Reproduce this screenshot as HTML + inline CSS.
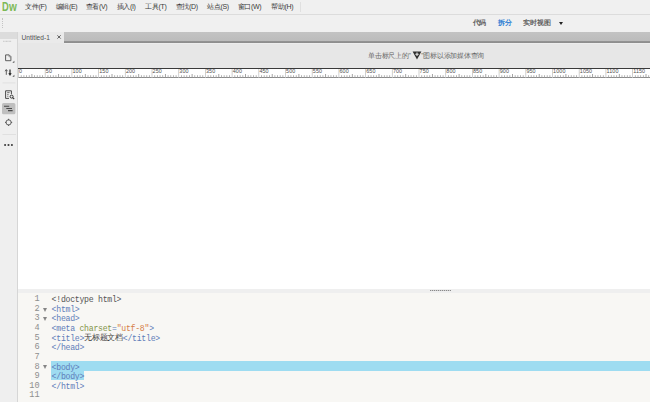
<!DOCTYPE html>
<html><head><meta charset="utf-8">
<style>
*{margin:0;padding:0;box-sizing:border-box}
html,body{width:650px;height:402px;overflow:hidden;background:#fff;font-family:"Liberation Sans",sans-serif}
.a{position:absolute}
#menubar{left:0;top:0;width:650px;height:15px;background:#f0f0f0;border-bottom:1px solid #dcdcdc}
.mi{position:absolute;top:1.6px;font-size:7px;line-height:10px;color:#3a3a3a;white-space:nowrap;letter-spacing:-0.3px}
.logo{position:absolute;top:-1px;font-size:12px;line-height:14px;font-weight:bold;color:#7db956;transform-origin:0 0;transform:scaleX(0.78)}
#toolbar{left:0;top:15px;width:650px;height:17px;background:#f0f0f0}
.vb{position:absolute;top:18.2px;font-size:6.6px;line-height:10px;color:#606060;font-weight:bold;white-space:nowrap;letter-spacing:-0.5px}
#tabbar{left:18px;top:32px;width:632px;height:11px;background:linear-gradient(#c3c3c3,#bcbcbc 78%,#939393 86%,#8c8c8c)}
#tab{left:18px;top:32px;width:46px;height:12px;background:#eaeaea}
#strip{left:18px;top:43px;width:632px;height:25px;background:#e7e7e7}
#ruler{left:18px;top:68px;width:632px;height:10px;background:#fff;border-top:1px solid #3a3a3a;border-bottom:1px solid #8a8a8a}
#left{left:0;top:32px;width:18px;height:370px;background:#efefef;border-right:1px solid #d6d6d6}
#lefthead{left:0;top:32px;width:17px;height:6.6px;background:#dcdcdc}
#splitter{left:18px;top:289px;width:632px;height:3.5px;background:#efefef}
#code{left:18px;top:292.5px;width:632px;height:110px;background:#f8f7f4}
.ln{position:absolute;left:0;width:21.6px;text-align:right;font-family:"Liberation Mono",monospace;font-size:8.6px;line-height:9.62px;color:#8e8e8e;margin-top:-0.2px}
.fd{position:absolute;left:24.7px;width:0;height:0;border-left:2.3px solid transparent;border-right:2.3px solid transparent;border-top:4px solid #858585;margin-top:-0.2px}
.cl{position:absolute;left:33.6px;font-family:"Liberation Mono",monospace;font-size:8.2px;letter-spacing:-0.27px;line-height:9.62px;color:#555;white-space:pre;margin-top:-0.2px}
.t{color:#5f7db9}
.at{color:#84954a}
.s{color:#d67e48}
.hl{background:#9edcf1}
.sq{letter-spacing:-0.25px;font-size:6.5px;line-height:10px;color:#666;white-space:nowrap}
svg text{font-family:"Liberation Sans",sans-serif}
</style></head><body>
<div id="menubar" class="a">
  <div class="logo" style="left:2.1px;top:-0.5px">D</div>
  <div class="logo" style="left:8.6px;top:-0.3px;transform:scaleX(0.84)">w</div>
  <div class="mi" style="left:25px">文件(F)</div>
  <div class="mi" style="left:55.5px">编辑(E)</div>
  <div class="mi" style="left:85.5px">查看(V)</div>
  <div class="mi" style="left:116.5px">插入(I)</div>
  <div class="mi" style="left:145px">工具(T)</div>
  <div class="mi" style="left:175.5px">查找(D)</div>
  <div class="mi" style="left:207px">站点(S)</div>
  <div class="mi" style="left:237.5px">窗口(W)</div>
  <div class="mi" style="left:271px">帮助(H)</div>
  <div class="a" style="left:300px;top:2px;width:1px;height:10px;background:#e0e0e0"></div>
</div>
<div id="toolbar" class="a"></div>
<div class="a" style="left:2px;top:18px;width:1px;height:10px;border-left:1px dotted #c4c4c4"></div>
<div class="vb" style="left:472.6px">代码</div>
<div class="vb" style="left:498.2px;color:#2a7bd2">拆分</div>
<div class="vb" style="left:522.8px;letter-spacing:0.2px">实时视图</div>
<div class="a" style="left:558.8px;top:21.8px;width:0;height:0;border-left:2.4px solid transparent;border-right:2.4px solid transparent;border-top:3px solid #222"></div>

<div id="left" class="a"></div>
<div id="lefthead" class="a"></div>
<svg class="a" style="left:0;top:36px" width="17" height="120">
<g fill="#b8b8b8"><rect x="3.2" y="4.8" width="0.9" height="0.9"/><rect x="4.6" y="4.8" width="0.9" height="0.9"/><rect x="6" y="4.8" width="0.9" height="0.9"/><rect x="7.4" y="4.8" width="0.9" height="0.9"/><rect x="8.8" y="4.8" width="0.9" height="0.9"/><rect x="10.2" y="4.8" width="0.9" height="0.9"/></g>
<path d="M5.6 18.9H9.2L10.9 20.6V24.7H5.6Z" fill="none" stroke="#555" stroke-width="0.95"/><path d="M9 19V20.8H10.8" fill="none" stroke="#777" stroke-width="0.7"/>
<path d="M12.4 26.8L14.4 24.8V26.8Z" fill="#555"/>
<path d="M6.3 38.8V33.8M5.1 35.2L6.3 33.6L7.5 35.2" fill="none" stroke="#555" stroke-width="0.95"/>
<path d="M10 33.4V38.4M8.9 37.1L10 38.8L11.1 37.1" fill="none" stroke="#2e2e2e" stroke-width="1.25"/>
<path d="M12.4 40.8L14.4 38.8V40.8Z" fill="#555"/>
<rect x="2.5" y="46.6" width="13" height="0.7" fill="#dadada"/>
<path d="M5.6 54.8H11.4V58M5.6 54.8V62.4H9" fill="none" stroke="#4a4a4a" stroke-width="1"/>
<path d="M7.2 56.6H9.6M7.2 58.4H8.6M7.2 60.2H8.4" stroke="#555" stroke-width="0.8"/>
<circle cx="11.6" cy="60.6" r="1.5" fill="none" stroke="#333" stroke-width="1"/>
<path d="M12.6 61.6L14.2 63" stroke="#333" stroke-width="1.1"/>
<rect x="2" y="67" width="13.4" height="11.3" rx="1.5" fill="#bfbfbf"/>
<path d="M4 70.3H9.2M6.3 72.5H12M8 74.6H12.6" stroke="#4a4a4a" stroke-width="1.1"/>
<circle cx="8.6" cy="86.4" r="2.6" fill="none" stroke="#505050" stroke-width="0.9"/>
<path d="M8.6 82.8V84.2M8.6 88.6V90M5 86.4H6.4M10.8 86.4H12.2" stroke="#505050" stroke-width="0.9"/>
<rect x="2.5" y="98.2" width="13.5" height="0.7" fill="#dadada"/>
<circle cx="5.1" cy="109" r="1.05" fill="#3a3a3a"/><circle cx="8.5" cy="109" r="1.05" fill="#3a3a3a"/><circle cx="11.9" cy="109" r="1.05" fill="#3a3a3a"/>
</svg>
<div id="tabbar" class="a"></div>
<div id="tab" class="a"><span class="a" style="left:3.6px;top:0.6px;font-size:6.6px;line-height:9px;color:#505050">Untitled-1</span><svg class="a" style="left:38px;top:2px" width="6" height="6"><path d="M1.4 1.3L4.7 4.6M4.7 1.3L1.4 4.6" stroke="#4a4a4a" stroke-width="0.85"/></svg></div>
<div id="strip" class="a"></div>
<div class="a" style="left:64px;top:43px;width:586px;height:1px;background:#ededed"></div>
<div class="a sq" style="left:368px;top:50.8px">单击标尺上的"</div>
<div class="a sq" style="left:421.3px;top:50.8px">"图标以添加媒体查询</div>
<svg class="a" style="left:412px;top:51px" width="10" height="9"><path d="M0.6 0.6H9.4L5 8.4Z" fill="#2e2e2e"/><path d="M5 1.5V5M3.3 3.2H6.7" stroke="#e7e7e7" stroke-width="1.1"/></svg>
<div id="ruler" class="a"></div>
<svg class="a" style="left:0;top:69px" width="650" height="9" font-size="5.4" fill="#4e4e4e" letter-spacing="0.1"><rect x="18.10" y="0" width="0.8" height="9" fill="#c4c4c4"/><text x="19.10" y="4">0</text><rect x="20.77" y="6.2" width="0.9" height="2.2" fill="#ababab"/><rect x="23.44" y="6.2" width="0.9" height="2.2" fill="#ababab"/><rect x="26.11" y="6.2" width="0.9" height="2.2" fill="#ababab"/><rect x="28.78" y="6.2" width="0.9" height="2.2" fill="#ababab"/><rect x="31.45" y="5" width="0.9" height="3.4" fill="#9a9a9a"/><rect x="34.12" y="6.2" width="0.9" height="2.2" fill="#ababab"/><rect x="36.79" y="6.2" width="0.9" height="2.2" fill="#ababab"/><rect x="39.46" y="6.2" width="0.9" height="2.2" fill="#ababab"/><rect x="42.13" y="6.2" width="0.9" height="2.2" fill="#ababab"/><rect x="44.80" y="0" width="0.8" height="9" fill="#c4c4c4"/><text x="45.80" y="4">50</text><rect x="47.47" y="6.2" width="0.9" height="2.2" fill="#ababab"/><rect x="50.14" y="6.2" width="0.9" height="2.2" fill="#ababab"/><rect x="52.81" y="6.2" width="0.9" height="2.2" fill="#ababab"/><rect x="55.48" y="6.2" width="0.9" height="2.2" fill="#ababab"/><rect x="58.15" y="5" width="0.9" height="3.4" fill="#9a9a9a"/><rect x="60.82" y="6.2" width="0.9" height="2.2" fill="#ababab"/><rect x="63.49" y="6.2" width="0.9" height="2.2" fill="#ababab"/><rect x="66.16" y="6.2" width="0.9" height="2.2" fill="#ababab"/><rect x="68.83" y="6.2" width="0.9" height="2.2" fill="#ababab"/><rect x="71.50" y="0" width="0.8" height="9" fill="#c4c4c4"/><text x="72.50" y="4">100</text><rect x="74.17" y="6.2" width="0.9" height="2.2" fill="#ababab"/><rect x="76.84" y="6.2" width="0.9" height="2.2" fill="#ababab"/><rect x="79.51" y="6.2" width="0.9" height="2.2" fill="#ababab"/><rect x="82.18" y="6.2" width="0.9" height="2.2" fill="#ababab"/><rect x="84.85" y="5" width="0.9" height="3.4" fill="#9a9a9a"/><rect x="87.52" y="6.2" width="0.9" height="2.2" fill="#ababab"/><rect x="90.19" y="6.2" width="0.9" height="2.2" fill="#ababab"/><rect x="92.86" y="6.2" width="0.9" height="2.2" fill="#ababab"/><rect x="95.53" y="6.2" width="0.9" height="2.2" fill="#ababab"/><rect x="98.20" y="0" width="0.8" height="9" fill="#c4c4c4"/><text x="99.20" y="4">150</text><rect x="100.87" y="6.2" width="0.9" height="2.2" fill="#ababab"/><rect x="103.54" y="6.2" width="0.9" height="2.2" fill="#ababab"/><rect x="106.21" y="6.2" width="0.9" height="2.2" fill="#ababab"/><rect x="108.88" y="6.2" width="0.9" height="2.2" fill="#ababab"/><rect x="111.55" y="5" width="0.9" height="3.4" fill="#9a9a9a"/><rect x="114.22" y="6.2" width="0.9" height="2.2" fill="#ababab"/><rect x="116.89" y="6.2" width="0.9" height="2.2" fill="#ababab"/><rect x="119.56" y="6.2" width="0.9" height="2.2" fill="#ababab"/><rect x="122.23" y="6.2" width="0.9" height="2.2" fill="#ababab"/><rect x="124.90" y="0" width="0.8" height="9" fill="#c4c4c4"/><text x="125.90" y="4">200</text><rect x="127.57" y="6.2" width="0.9" height="2.2" fill="#ababab"/><rect x="130.24" y="6.2" width="0.9" height="2.2" fill="#ababab"/><rect x="132.91" y="6.2" width="0.9" height="2.2" fill="#ababab"/><rect x="135.58" y="6.2" width="0.9" height="2.2" fill="#ababab"/><rect x="138.25" y="5" width="0.9" height="3.4" fill="#9a9a9a"/><rect x="140.92" y="6.2" width="0.9" height="2.2" fill="#ababab"/><rect x="143.59" y="6.2" width="0.9" height="2.2" fill="#ababab"/><rect x="146.26" y="6.2" width="0.9" height="2.2" fill="#ababab"/><rect x="148.93" y="6.2" width="0.9" height="2.2" fill="#ababab"/><rect x="151.60" y="0" width="0.8" height="9" fill="#c4c4c4"/><text x="152.60" y="4">250</text><rect x="154.27" y="6.2" width="0.9" height="2.2" fill="#ababab"/><rect x="156.94" y="6.2" width="0.9" height="2.2" fill="#ababab"/><rect x="159.61" y="6.2" width="0.9" height="2.2" fill="#ababab"/><rect x="162.28" y="6.2" width="0.9" height="2.2" fill="#ababab"/><rect x="164.95" y="5" width="0.9" height="3.4" fill="#9a9a9a"/><rect x="167.62" y="6.2" width="0.9" height="2.2" fill="#ababab"/><rect x="170.29" y="6.2" width="0.9" height="2.2" fill="#ababab"/><rect x="172.96" y="6.2" width="0.9" height="2.2" fill="#ababab"/><rect x="175.63" y="6.2" width="0.9" height="2.2" fill="#ababab"/><rect x="178.30" y="0" width="0.8" height="9" fill="#c4c4c4"/><text x="179.30" y="4">300</text><rect x="180.97" y="6.2" width="0.9" height="2.2" fill="#ababab"/><rect x="183.64" y="6.2" width="0.9" height="2.2" fill="#ababab"/><rect x="186.31" y="6.2" width="0.9" height="2.2" fill="#ababab"/><rect x="188.98" y="6.2" width="0.9" height="2.2" fill="#ababab"/><rect x="191.65" y="5" width="0.9" height="3.4" fill="#9a9a9a"/><rect x="194.32" y="6.2" width="0.9" height="2.2" fill="#ababab"/><rect x="196.99" y="6.2" width="0.9" height="2.2" fill="#ababab"/><rect x="199.66" y="6.2" width="0.9" height="2.2" fill="#ababab"/><rect x="202.33" y="6.2" width="0.9" height="2.2" fill="#ababab"/><rect x="205.00" y="0" width="0.8" height="9" fill="#c4c4c4"/><text x="206.00" y="4">350</text><rect x="207.67" y="6.2" width="0.9" height="2.2" fill="#ababab"/><rect x="210.34" y="6.2" width="0.9" height="2.2" fill="#ababab"/><rect x="213.01" y="6.2" width="0.9" height="2.2" fill="#ababab"/><rect x="215.68" y="6.2" width="0.9" height="2.2" fill="#ababab"/><rect x="218.35" y="5" width="0.9" height="3.4" fill="#9a9a9a"/><rect x="221.02" y="6.2" width="0.9" height="2.2" fill="#ababab"/><rect x="223.69" y="6.2" width="0.9" height="2.2" fill="#ababab"/><rect x="226.36" y="6.2" width="0.9" height="2.2" fill="#ababab"/><rect x="229.03" y="6.2" width="0.9" height="2.2" fill="#ababab"/><rect x="231.70" y="0" width="0.8" height="9" fill="#c4c4c4"/><text x="232.70" y="4">400</text><rect x="234.37" y="6.2" width="0.9" height="2.2" fill="#ababab"/><rect x="237.04" y="6.2" width="0.9" height="2.2" fill="#ababab"/><rect x="239.71" y="6.2" width="0.9" height="2.2" fill="#ababab"/><rect x="242.38" y="6.2" width="0.9" height="2.2" fill="#ababab"/><rect x="245.05" y="5" width="0.9" height="3.4" fill="#9a9a9a"/><rect x="247.72" y="6.2" width="0.9" height="2.2" fill="#ababab"/><rect x="250.39" y="6.2" width="0.9" height="2.2" fill="#ababab"/><rect x="253.06" y="6.2" width="0.9" height="2.2" fill="#ababab"/><rect x="255.73" y="6.2" width="0.9" height="2.2" fill="#ababab"/><rect x="258.40" y="0" width="0.8" height="9" fill="#c4c4c4"/><text x="259.40" y="4">450</text><rect x="261.07" y="6.2" width="0.9" height="2.2" fill="#ababab"/><rect x="263.74" y="6.2" width="0.9" height="2.2" fill="#ababab"/><rect x="266.41" y="6.2" width="0.9" height="2.2" fill="#ababab"/><rect x="269.08" y="6.2" width="0.9" height="2.2" fill="#ababab"/><rect x="271.75" y="5" width="0.9" height="3.4" fill="#9a9a9a"/><rect x="274.42" y="6.2" width="0.9" height="2.2" fill="#ababab"/><rect x="277.09" y="6.2" width="0.9" height="2.2" fill="#ababab"/><rect x="279.76" y="6.2" width="0.9" height="2.2" fill="#ababab"/><rect x="282.43" y="6.2" width="0.9" height="2.2" fill="#ababab"/><rect x="285.10" y="0" width="0.8" height="9" fill="#c4c4c4"/><text x="286.10" y="4">500</text><rect x="287.77" y="6.2" width="0.9" height="2.2" fill="#ababab"/><rect x="290.44" y="6.2" width="0.9" height="2.2" fill="#ababab"/><rect x="293.11" y="6.2" width="0.9" height="2.2" fill="#ababab"/><rect x="295.78" y="6.2" width="0.9" height="2.2" fill="#ababab"/><rect x="298.45" y="5" width="0.9" height="3.4" fill="#9a9a9a"/><rect x="301.12" y="6.2" width="0.9" height="2.2" fill="#ababab"/><rect x="303.79" y="6.2" width="0.9" height="2.2" fill="#ababab"/><rect x="306.46" y="6.2" width="0.9" height="2.2" fill="#ababab"/><rect x="309.13" y="6.2" width="0.9" height="2.2" fill="#ababab"/><rect x="311.80" y="0" width="0.8" height="9" fill="#c4c4c4"/><text x="312.80" y="4">550</text><rect x="314.47" y="6.2" width="0.9" height="2.2" fill="#ababab"/><rect x="317.14" y="6.2" width="0.9" height="2.2" fill="#ababab"/><rect x="319.81" y="6.2" width="0.9" height="2.2" fill="#ababab"/><rect x="322.48" y="6.2" width="0.9" height="2.2" fill="#ababab"/><rect x="325.15" y="5" width="0.9" height="3.4" fill="#9a9a9a"/><rect x="327.82" y="6.2" width="0.9" height="2.2" fill="#ababab"/><rect x="330.49" y="6.2" width="0.9" height="2.2" fill="#ababab"/><rect x="333.16" y="6.2" width="0.9" height="2.2" fill="#ababab"/><rect x="335.83" y="6.2" width="0.9" height="2.2" fill="#ababab"/><rect x="338.50" y="0" width="0.8" height="9" fill="#c4c4c4"/><text x="339.50" y="4">600</text><rect x="341.17" y="6.2" width="0.9" height="2.2" fill="#ababab"/><rect x="343.84" y="6.2" width="0.9" height="2.2" fill="#ababab"/><rect x="346.51" y="6.2" width="0.9" height="2.2" fill="#ababab"/><rect x="349.18" y="6.2" width="0.9" height="2.2" fill="#ababab"/><rect x="351.85" y="5" width="0.9" height="3.4" fill="#9a9a9a"/><rect x="354.52" y="6.2" width="0.9" height="2.2" fill="#ababab"/><rect x="357.19" y="6.2" width="0.9" height="2.2" fill="#ababab"/><rect x="359.86" y="6.2" width="0.9" height="2.2" fill="#ababab"/><rect x="362.53" y="6.2" width="0.9" height="2.2" fill="#ababab"/><rect x="365.20" y="0" width="0.8" height="9" fill="#c4c4c4"/><text x="366.20" y="4">650</text><rect x="367.87" y="6.2" width="0.9" height="2.2" fill="#ababab"/><rect x="370.54" y="6.2" width="0.9" height="2.2" fill="#ababab"/><rect x="373.21" y="6.2" width="0.9" height="2.2" fill="#ababab"/><rect x="375.88" y="6.2" width="0.9" height="2.2" fill="#ababab"/><rect x="378.55" y="5" width="0.9" height="3.4" fill="#9a9a9a"/><rect x="381.22" y="6.2" width="0.9" height="2.2" fill="#ababab"/><rect x="383.89" y="6.2" width="0.9" height="2.2" fill="#ababab"/><rect x="386.56" y="6.2" width="0.9" height="2.2" fill="#ababab"/><rect x="389.23" y="6.2" width="0.9" height="2.2" fill="#ababab"/><rect x="391.90" y="0" width="0.8" height="9" fill="#c4c4c4"/><text x="392.90" y="4">700</text><rect x="394.57" y="6.2" width="0.9" height="2.2" fill="#ababab"/><rect x="397.24" y="6.2" width="0.9" height="2.2" fill="#ababab"/><rect x="399.91" y="6.2" width="0.9" height="2.2" fill="#ababab"/><rect x="402.58" y="6.2" width="0.9" height="2.2" fill="#ababab"/><rect x="405.25" y="5" width="0.9" height="3.4" fill="#9a9a9a"/><rect x="407.92" y="6.2" width="0.9" height="2.2" fill="#ababab"/><rect x="410.59" y="6.2" width="0.9" height="2.2" fill="#ababab"/><rect x="413.26" y="6.2" width="0.9" height="2.2" fill="#ababab"/><rect x="415.93" y="6.2" width="0.9" height="2.2" fill="#ababab"/><rect x="418.60" y="0" width="0.8" height="9" fill="#c4c4c4"/><text x="419.60" y="4">750</text><rect x="421.27" y="6.2" width="0.9" height="2.2" fill="#ababab"/><rect x="423.94" y="6.2" width="0.9" height="2.2" fill="#ababab"/><rect x="426.61" y="6.2" width="0.9" height="2.2" fill="#ababab"/><rect x="429.28" y="6.2" width="0.9" height="2.2" fill="#ababab"/><rect x="431.95" y="5" width="0.9" height="3.4" fill="#9a9a9a"/><rect x="434.62" y="6.2" width="0.9" height="2.2" fill="#ababab"/><rect x="437.29" y="6.2" width="0.9" height="2.2" fill="#ababab"/><rect x="439.96" y="6.2" width="0.9" height="2.2" fill="#ababab"/><rect x="442.63" y="6.2" width="0.9" height="2.2" fill="#ababab"/><rect x="445.30" y="0" width="0.8" height="9" fill="#c4c4c4"/><text x="446.30" y="4">800</text><rect x="447.97" y="6.2" width="0.9" height="2.2" fill="#ababab"/><rect x="450.64" y="6.2" width="0.9" height="2.2" fill="#ababab"/><rect x="453.31" y="6.2" width="0.9" height="2.2" fill="#ababab"/><rect x="455.98" y="6.2" width="0.9" height="2.2" fill="#ababab"/><rect x="458.65" y="5" width="0.9" height="3.4" fill="#9a9a9a"/><rect x="461.32" y="6.2" width="0.9" height="2.2" fill="#ababab"/><rect x="463.99" y="6.2" width="0.9" height="2.2" fill="#ababab"/><rect x="466.66" y="6.2" width="0.9" height="2.2" fill="#ababab"/><rect x="469.33" y="6.2" width="0.9" height="2.2" fill="#ababab"/><rect x="472.00" y="0" width="0.8" height="9" fill="#c4c4c4"/><text x="473.00" y="4">850</text><rect x="474.67" y="6.2" width="0.9" height="2.2" fill="#ababab"/><rect x="477.34" y="6.2" width="0.9" height="2.2" fill="#ababab"/><rect x="480.01" y="6.2" width="0.9" height="2.2" fill="#ababab"/><rect x="482.68" y="6.2" width="0.9" height="2.2" fill="#ababab"/><rect x="485.35" y="5" width="0.9" height="3.4" fill="#9a9a9a"/><rect x="488.02" y="6.2" width="0.9" height="2.2" fill="#ababab"/><rect x="490.69" y="6.2" width="0.9" height="2.2" fill="#ababab"/><rect x="493.36" y="6.2" width="0.9" height="2.2" fill="#ababab"/><rect x="496.03" y="6.2" width="0.9" height="2.2" fill="#ababab"/><rect x="498.70" y="0" width="0.8" height="9" fill="#c4c4c4"/><text x="499.70" y="4">900</text><rect x="501.37" y="6.2" width="0.9" height="2.2" fill="#ababab"/><rect x="504.04" y="6.2" width="0.9" height="2.2" fill="#ababab"/><rect x="506.71" y="6.2" width="0.9" height="2.2" fill="#ababab"/><rect x="509.38" y="6.2" width="0.9" height="2.2" fill="#ababab"/><rect x="512.05" y="5" width="0.9" height="3.4" fill="#9a9a9a"/><rect x="514.72" y="6.2" width="0.9" height="2.2" fill="#ababab"/><rect x="517.39" y="6.2" width="0.9" height="2.2" fill="#ababab"/><rect x="520.06" y="6.2" width="0.9" height="2.2" fill="#ababab"/><rect x="522.73" y="6.2" width="0.9" height="2.2" fill="#ababab"/><rect x="525.40" y="0" width="0.8" height="9" fill="#c4c4c4"/><text x="526.40" y="4">950</text><rect x="528.07" y="6.2" width="0.9" height="2.2" fill="#ababab"/><rect x="530.74" y="6.2" width="0.9" height="2.2" fill="#ababab"/><rect x="533.41" y="6.2" width="0.9" height="2.2" fill="#ababab"/><rect x="536.08" y="6.2" width="0.9" height="2.2" fill="#ababab"/><rect x="538.75" y="5" width="0.9" height="3.4" fill="#9a9a9a"/><rect x="541.42" y="6.2" width="0.9" height="2.2" fill="#ababab"/><rect x="544.09" y="6.2" width="0.9" height="2.2" fill="#ababab"/><rect x="546.76" y="6.2" width="0.9" height="2.2" fill="#ababab"/><rect x="549.43" y="6.2" width="0.9" height="2.2" fill="#ababab"/><rect x="552.10" y="0" width="0.8" height="9" fill="#c4c4c4"/><text x="553.10" y="4">1000</text><rect x="554.77" y="6.2" width="0.9" height="2.2" fill="#ababab"/><rect x="557.44" y="6.2" width="0.9" height="2.2" fill="#ababab"/><rect x="560.11" y="6.2" width="0.9" height="2.2" fill="#ababab"/><rect x="562.78" y="6.2" width="0.9" height="2.2" fill="#ababab"/><rect x="565.45" y="5" width="0.9" height="3.4" fill="#9a9a9a"/><rect x="568.12" y="6.2" width="0.9" height="2.2" fill="#ababab"/><rect x="570.79" y="6.2" width="0.9" height="2.2" fill="#ababab"/><rect x="573.46" y="6.2" width="0.9" height="2.2" fill="#ababab"/><rect x="576.13" y="6.2" width="0.9" height="2.2" fill="#ababab"/><rect x="578.80" y="0" width="0.8" height="9" fill="#c4c4c4"/><text x="579.80" y="4">1050</text><rect x="581.47" y="6.2" width="0.9" height="2.2" fill="#ababab"/><rect x="584.14" y="6.2" width="0.9" height="2.2" fill="#ababab"/><rect x="586.81" y="6.2" width="0.9" height="2.2" fill="#ababab"/><rect x="589.48" y="6.2" width="0.9" height="2.2" fill="#ababab"/><rect x="592.15" y="5" width="0.9" height="3.4" fill="#9a9a9a"/><rect x="594.82" y="6.2" width="0.9" height="2.2" fill="#ababab"/><rect x="597.49" y="6.2" width="0.9" height="2.2" fill="#ababab"/><rect x="600.16" y="6.2" width="0.9" height="2.2" fill="#ababab"/><rect x="602.83" y="6.2" width="0.9" height="2.2" fill="#ababab"/><rect x="605.50" y="0" width="0.8" height="9" fill="#c4c4c4"/><text x="606.50" y="4">1100</text><rect x="608.17" y="6.2" width="0.9" height="2.2" fill="#ababab"/><rect x="610.84" y="6.2" width="0.9" height="2.2" fill="#ababab"/><rect x="613.51" y="6.2" width="0.9" height="2.2" fill="#ababab"/><rect x="616.18" y="6.2" width="0.9" height="2.2" fill="#ababab"/><rect x="618.85" y="5" width="0.9" height="3.4" fill="#9a9a9a"/><rect x="621.52" y="6.2" width="0.9" height="2.2" fill="#ababab"/><rect x="624.19" y="6.2" width="0.9" height="2.2" fill="#ababab"/><rect x="626.86" y="6.2" width="0.9" height="2.2" fill="#ababab"/><rect x="629.53" y="6.2" width="0.9" height="2.2" fill="#ababab"/><rect x="632.20" y="0" width="0.8" height="9" fill="#c4c4c4"/><text x="633.20" y="4">1150</text><rect x="634.87" y="6.2" width="0.9" height="2.2" fill="#ababab"/><rect x="637.54" y="6.2" width="0.9" height="2.2" fill="#ababab"/><rect x="640.21" y="6.2" width="0.9" height="2.2" fill="#ababab"/><rect x="642.88" y="6.2" width="0.9" height="2.2" fill="#ababab"/><rect x="645.55" y="5" width="0.9" height="3.4" fill="#9a9a9a"/><rect x="648.22" y="6.2" width="0.9" height="2.2" fill="#ababab"/><rect x="650.89" y="6.2" width="0.9" height="2.2" fill="#ababab"/></svg>
<div id="splitter" class="a"></div>
<div class="a" style="left:429.5px;top:290.3px;width:21px;height:1px;background:repeating-linear-gradient(90deg,#8a8a8a 0 1px,#d0d0d0 1px 2px)"></div>
<div id="code" class="a">
  <div class="ln" style="top:2.9px">1</div>
  <div class="ln" style="top:12.52px">2</div>
  <div class="ln" style="top:22.14px">3</div>
  <div class="ln" style="top:31.76px">4</div>
  <div class="ln" style="top:41.38px">5</div>
  <div class="ln" style="top:51.0px">6</div>
  <div class="ln" style="top:60.62px">7</div>
  <div class="ln" style="top:70.24px">8</div>
  <div class="ln" style="top:79.86px">9</div>
  <div class="ln" style="top:89.48px">10</div>
  <div class="ln" style="top:99.1px">11</div>
  <div class="fd" style="top:15.2px"></div>
  <div class="fd" style="top:24.8px"></div>
  <div class="fd" style="top:73.1px"></div>
  <div class="a hl" style="left:33px;top:68.6px;width:600px;height:9.8px"></div>
  <div class="a hl" style="left:33px;top:78.4px;width:33px;height:9.1px"></div>
  <div class="cl" style="top:2.9px">&lt;!doctype html&gt;</div>
  <div class="cl t" style="top:12.52px">&lt;html&gt;</div>
  <div class="cl t" style="top:22.14px">&lt;head&gt;</div>
  <div class="cl t" style="top:31.76px">&lt;meta <span class="at">charset</span>=<span class="s">"utf-8"</span>&gt;</div>
  <div class="cl t" style="top:41.38px">&lt;title&gt;<span style="color:#3a3a3a;position:relative;top:-0.8px">无标题文档</span>&lt;/title&gt;</div>
  <div class="cl t" style="top:51.0px">&lt;/head&gt;</div>
  <div class="cl t" style="top:70.24px">&lt;body&gt;</div>
  <div class="cl t" style="top:79.86px">&lt;/body&gt;</div>
  <div class="cl t" style="top:89.48px">&lt;/html&gt;</div>
</div>
</body></html>
